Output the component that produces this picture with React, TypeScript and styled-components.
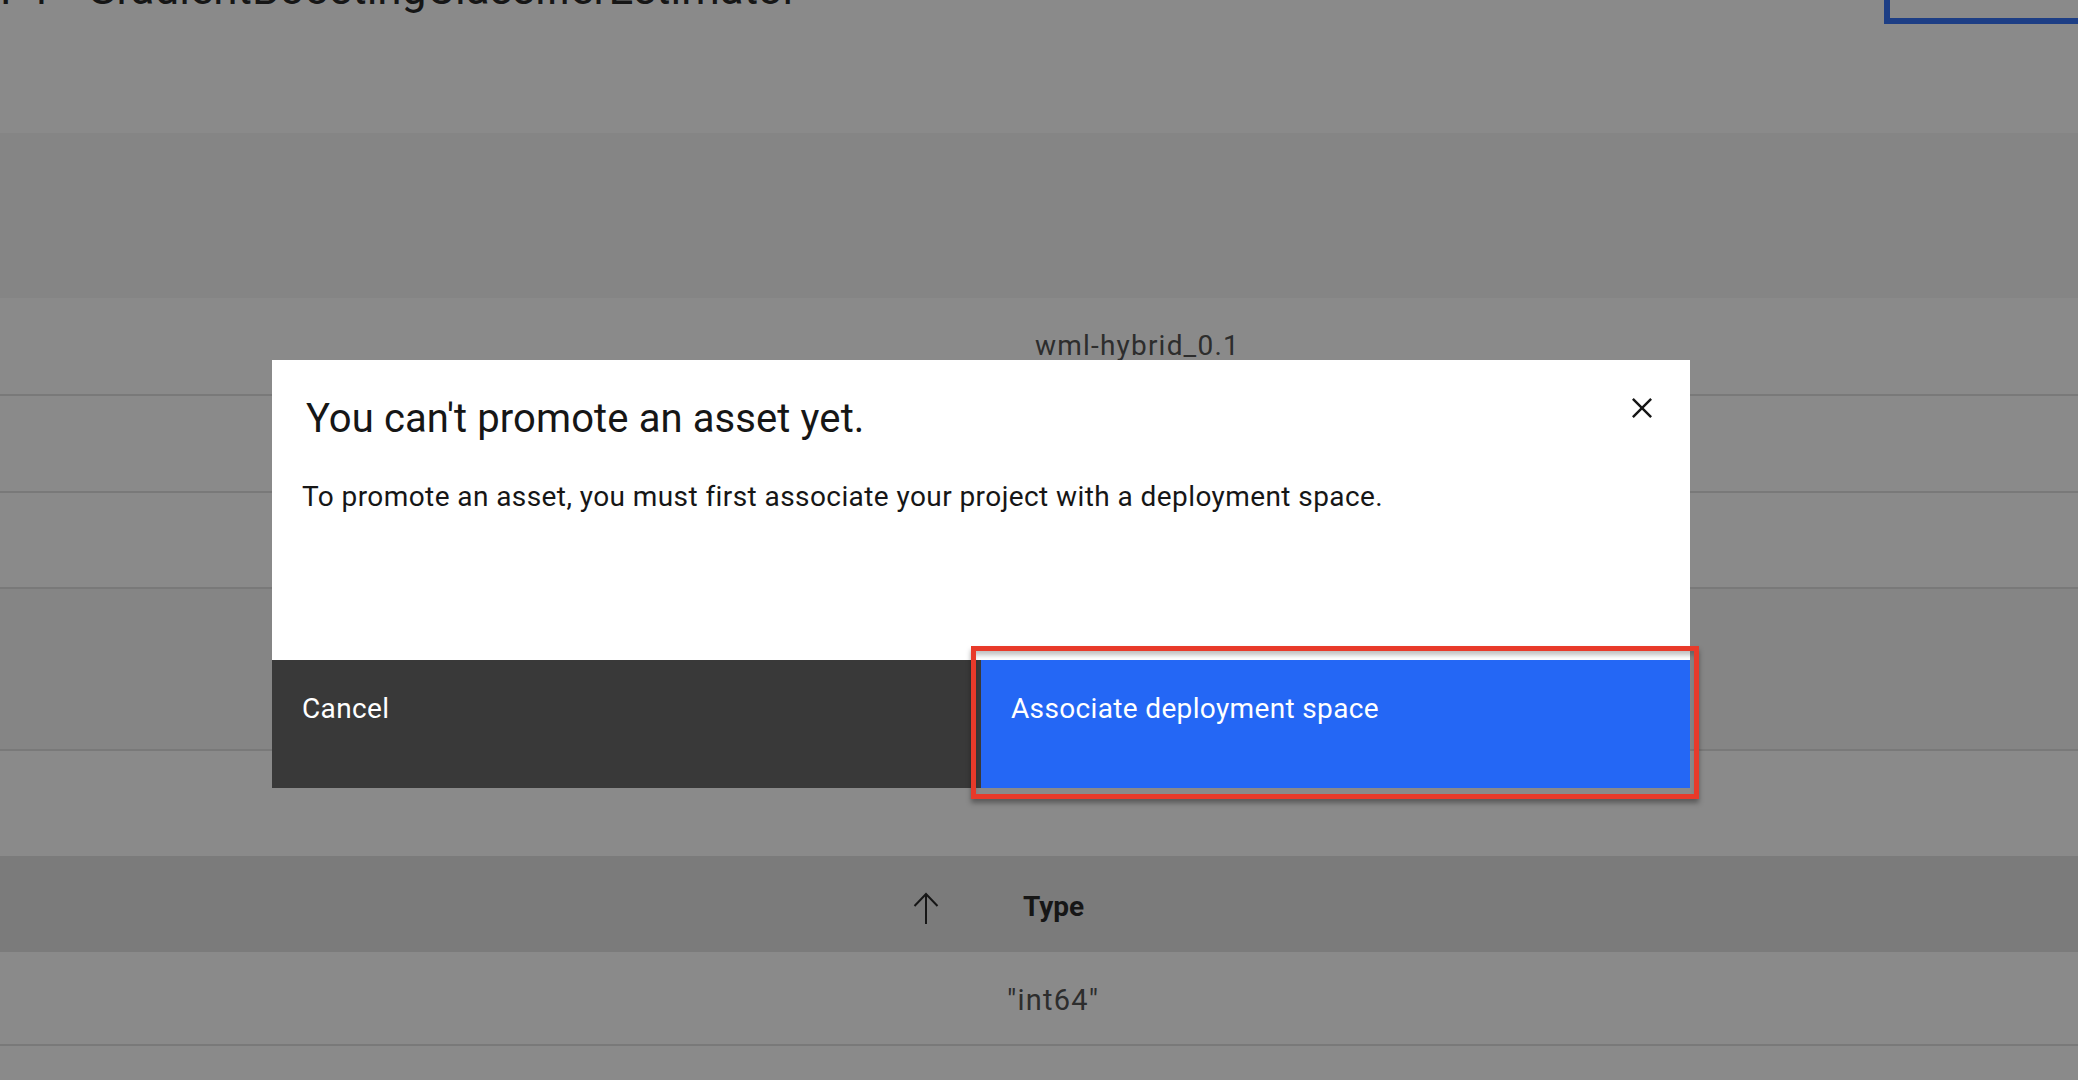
import React from 'react';
import styled, { createGlobalStyle } from 'styled-components';

const Global = createGlobalStyle`
  html, body { margin: 0; padding: 0; background: #ffffff; overflow: hidden; }
  body { font-family: Roboto, "Noto Sans", "Liberation Sans", Arial, sans-serif; }
  * { box-sizing: border-box; }
`;

const Page = styled.div`
  width: 2078px;
  height: 1080px;
  overflow: hidden;
  background: #ffffff;
  display: flex;
  flex-direction: column;
`;

const TitleBar = styled.header`
  flex: none;
  height: 133px;
  display: flex;
  justify-content: space-between;
  align-items: flex-start;
  overflow: hidden;
`;

const PageTitle = styled.h1`
  margin: -37px 0 0 0;
  font-size: 44px;
  line-height: 52px;
  font-weight: 400;
  color: #161616;
  white-space: nowrap;
`;

const OutlineAction = styled.div`
  width: 194px;
  height: 24px;
  border-left: 6px solid #2467f5;
  border-bottom: 6px solid #2467f5;
`;

type Tone = 'white' | 'band' | 'head';
const toneBg: Record<Tone, string> = { white: '#ffffff', band: '#f4f4f4', head: '#e0e0e0' };

const Row = styled.div<{ $h: number; $tone?: Tone; $line?: boolean; $pad?: number }>`
  flex: none;
  box-sizing: content-box;
  height: ${p => p.$h}px;
  background: ${p => toneBg[p.$tone ?? 'white']};
  border-bottom: ${p => (p.$line ? '2px solid #dcdcdc' : 'none')};
  display: flex;
  align-items: center;
  padding-left: ${p => p.$pad ?? 0}px;
`;

const Filler = styled.div`
  flex: 1;
  background: #ffffff;
`;

const CellText = styled.span<{ $size?: number; $shift?: number }>`
  font-size: ${p => p.$size ?? 28}px;
  line-height: 32px;
  letter-spacing: 1.2px;
  color: #444444;
  white-space: nowrap;
  margin-top: ${p => p.$shift ?? 0}px;
`;

const SortIcon = styled.svg`
  flex: none;
  margin-top: 7px;
`;

const HeaderLabel = styled.span`
  margin-left: 84px;
  margin-top: 6px;
  font-size: 28px;
  line-height: 32px;
  font-weight: 700;
  color: #161616;
`;

const Overlay = styled.div`
  position: fixed;
  inset: 0;
  background: rgba(22, 22, 22, 0.5);
  padding: 360px 0 0 272px;
  display: flex;
  align-items: flex-start;
`;

const Modal = styled.div`
  position: relative;
  width: 1418px;
  height: 428px;
  background: #ffffff;
  display: flex;
  flex-direction: column;
`;

const ModalHeader = styled.div`
  padding: 33px 96px 0 34px;
`;

const ModalTitle = styled.h2`
  margin: 0;
  font-size: 40px;
  line-height: 52px;
  font-weight: 400;
  letter-spacing: 0.1px;
  color: #161616;
`;

const CloseButton = styled.button`
  position: absolute;
  top: 0;
  right: 0;
  width: 96px;
  height: 96px;
  border: none;
  background: transparent;
  display: flex;
  align-items: center;
  justify-content: center;
  padding: 0;
  cursor: pointer;
`;

const ModalBody = styled.p`
  margin: 32px 0 0 0;
  padding: 0 30px;
  font-size: 28px;
  line-height: 40px;
  letter-spacing: 0.42px;
  color: #161616;
`;

const Footer = styled.div`
  margin-top: auto;
  height: 128px;
  display: grid;
  grid-template-columns: 1fr 1fr;
`;

const FooterButton = styled.button<{ $kind: 'secondary' | 'primary' }>`
  border: none;
  margin: 0;
  padding: 31px 30px;
  text-align: left;
  display: flex;
  align-items: flex-start;
  font-family: inherit;
  font-size: 28px;
  line-height: 36px;
  font-weight: 400;
  letter-spacing: 0.35px;
  color: #ffffff;
  background: ${p => (p.$kind === 'primary' ? '#2467f5' : '#393939')};
  cursor: pointer;
`;

const Highlight = styled.div`
  position: absolute;
  left: 699px;
  top: 286px;
  width: 728px;
  height: 153px;
  border: 5px solid #e83a2a;
  box-shadow: 0 4px 5px rgba(0, 0, 0, 0.35), inset 0 6px 5px -2px rgba(0, 0, 0, 0.25);
  pointer-events: none;
`;

export default function App() {
  return (
    <>
      <Global />
      <Page>
        <TitleBar>
          <PageTitle>P1 - GradientBoostingClassifierEstimator</PageTitle>
          <OutlineAction />
        </TitleBar>
        <Row $h={165} $tone="band" />
        <Row $h={96} $line $pad={1035}>
          <CellText>wml-hybrid_0.1</CellText>
        </Row>
        <Row $h={95} $line />
        <Row $h={94} $line />
        <Row $h={160} $tone="band" $line />
        <Row $h={105} />
        <Row $h={96} $tone="head" $pad={913}>
          <SortIcon width="26" height="32" viewBox="0 0 26 32" fill="none">
            <path d="M1.5 14 L13 2 L24.5 14" stroke="#161616" strokeWidth="2" />
            <path d="M13 2 L13 32" stroke="#161616" strokeWidth="2" />
          </SortIcon>
          <HeaderLabel>Type</HeaderLabel>
        </Row>
        <Row $h={92} $line $pad={1007}>
          <CellText $size={29} $shift={4}>"int64"</CellText>
        </Row>
        <Filler />
      </Page>
      <Overlay>
        <Modal role="dialog" aria-modal="true">
          <ModalHeader>
            <ModalTitle>You can't promote an asset yet.</ModalTitle>
          </ModalHeader>
          <CloseButton aria-label="Close">
            <svg width="40" height="40" viewBox="0 0 32 32" fill="#161616">
              <path d="M24 9.4 22.6 8 16 14.6 9.4 8 8 9.4 14.6 16 8 22.6 9.4 24 16 17.4 22.6 24 24 22.6 17.4 16z" />
            </svg>
          </CloseButton>
          <ModalBody>
            To promote an asset, you must first associate your project with a deployment space.
          </ModalBody>
          <Footer>
            <FooterButton $kind="secondary">Cancel</FooterButton>
            <FooterButton $kind="primary">Associate deployment space</FooterButton>
          </Footer>
          <Highlight />
        </Modal>
      </Overlay>
    </>
  );
}
